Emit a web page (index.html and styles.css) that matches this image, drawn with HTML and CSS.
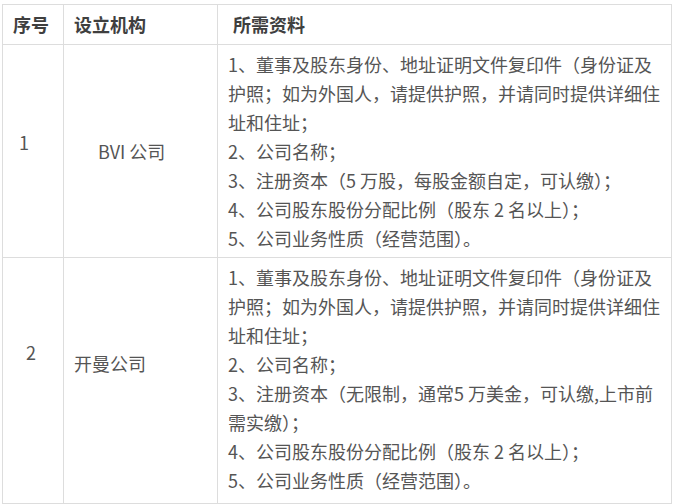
FILE: index.html
```html
<!DOCTYPE html>
<html lang="zh-CN">
<head>
<meta charset="utf-8">
<link rel="stylesheet" href="styles.css">
</head>
<body>
<table class="info">
  <colgroup>
    <col class="c1"><col class="c2"><col class="c3">
  </colgroup>
  <thead>
    <tr>
      <th class="head h1">序号</th>
      <th class="head h2">设立机构</th>
      <th class="head h3">所需资料</th>
    </tr>
  </thead>
  <tbody>
    <tr class="r1">
      <td class="num num1">1</td>
      <td class="org org1">BVI 公司</td>
      <td class="docs">1、董事及股东身份、地址证明文件复印件（身份证及护照；如为外国人，请提供护照，并请同时提供详细住址和住址；<br>2、公司名称；<br>3、注册资本（5 万股，每股金额自定，可认缴）；<br>4、公司股东股份分配比例（股东 2 名以上）；<br>5、公司业务性质（经营范围）。</td>
    </tr>
    <tr class="r2">
      <td class="num num2">2</td>
      <td class="org org2">开曼公司</td>
      <td class="docs docs2">1、董事及股东身份、地址证明文件复印件（身份证及护照；如为外国人，请提供护照，并请同时提供详细住址和住址；<br>2、公司名称；<br>3、注册资本（无限制，通常5 万美金，可认缴,上市前需实缴）；<br>4、公司股东股份分配比例（股东 2 名以上）；<br>5、公司业务性质（经营范围）。</td>
    </tr>
  </tbody>
</table>
</body>
</html>
```

FILE: styles.css
```css
html, body {
  margin: 0;
  padding: 0;
  background: #ffffff;
}
body {
  font-family: "Noto Sans CJK SC", "Noto Sans", sans-serif;
  color: #555555;
}
.info {
  margin: 4px 0 0 2px;
  width: 669px;
  border-collapse: collapse;
  table-layout: fixed;
  font-size: 18px;
}
.c1 { width: 61px; }
.c2 { width: 154px; }
.c3 { width: 454px; }
.head, .num, .org, .docs {
  border: 1px solid #dddddd;
  text-align: left;
  font-weight: normal;
}
.head {
  height: 39px;
  font-weight: bold;
  color: #3f3f3f;
  line-height: 39px;
  vertical-align: middle;
  padding: 0 0 0 10px;
}
.h3 { padding-left: 15px; }
.docs {
  padding: 5px 10px 4px 10px;
  line-height: 29px;
  vertical-align: top;
}
.docs2 { padding: 5px 10px 8px 10px; }
.num, .org {
  vertical-align: middle;
  line-height: 29px;
}
.num1 { padding: 0 0 18px 16px; }
.org1 { padding: 0 0 0 34px; }
.num2 { padding: 0 0 56px 23px; }
.org2 { padding: 0 0 34px 10px; }
```
